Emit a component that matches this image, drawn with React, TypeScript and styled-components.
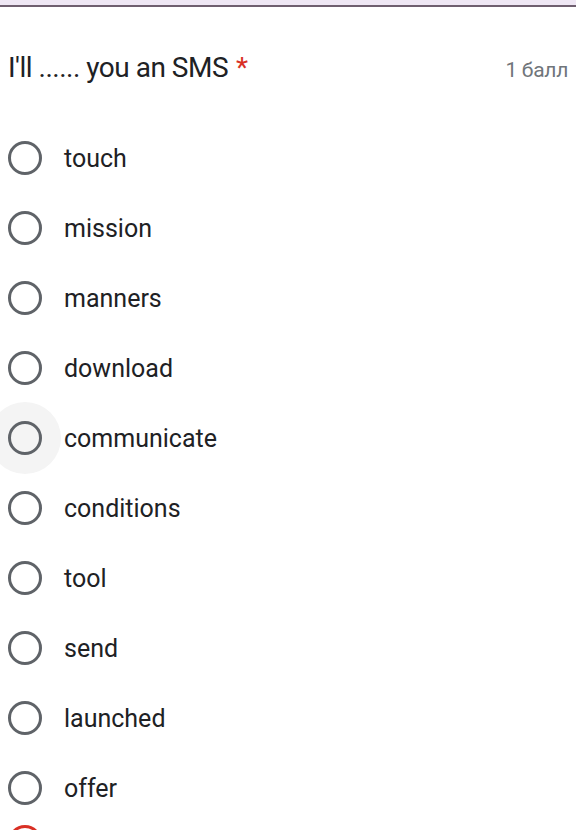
import * as React from 'react';
import styled, { createGlobalStyle } from 'styled-components';

const GlobalStyle = createGlobalStyle`
  html, body {
    margin: 0;
    padding: 0;
    background: #fff;
    overflow: hidden;
  }
  body {
    font-family: Roboto, "Liberation Sans", Arial, sans-serif;
    color: #202124;
  }
`;

const Page = styled.div`
  width: 576px;
  height: 830px;
  overflow: hidden;
  background: #fff;
`;

const TopBand = styled.div`
  height: 5px;
  background: #efe7f4;
  border-bottom: 2px solid #6f5f6f;
`;

const Header = styled.div`
  display: flex;
  align-items: baseline;
  justify-content: space-between;
  padding: 44px 8px 0 8px;
  height: 72px;
  box-sizing: border-box;
`;

const Title = styled.div`
  font-size: 28px;
  letter-spacing: -0.5px;
  color: #202124;
`;

const Star = styled.span`
  color: #d93025;
  margin-left: 8px;
`;

const Points = styled.div`
  font-size: 21px;
  letter-spacing: -0.3px;
  color: #70757a;
`;

const List = styled.div`
  display: flex;
  flex-direction: column;
  padding-top: 44px;
`;

const Row = styled.div<{ $last?: boolean }>`
  display: flex;
  align-items: ${p => (p.$last ? 'flex-start' : 'center')};
  height: 70px;
  padding-left: 8px;
  padding-top: ${p => (p.$last ? '2px' : '0')};
  box-sizing: border-box;
`;

const RadioWrap = styled.div<{ $hover?: boolean }>`
  position: relative;
  width: 34px;
  height: 34px;
  flex-shrink: 0;

  &::before {
    content: '';
    display: ${p => (p.$hover ? 'block' : 'none')};
    position: absolute;
    left: -19px;
    top: -19px;
    width: 72px;
    height: 72px;
    border-radius: 50%;
    background: #f4f4f4;
  }
`;

const Radio = styled.div<{ $color?: string }>`
  position: relative;
  width: 28px;
  height: 28px;
  border-radius: 50%;
  border: 3px solid ${p => p.$color || '#5f6368'};
`;

const Label = styled.div`
  margin-left: 22px;
  font-size: 25px;
  letter-spacing: 0;
  color: #202124;
`;

const options = [
  'touch',
  'mission',
  'manners',
  'download',
  'communicate',
  'conditions',
  'tool',
  'send',
  'launched',
  'offer',
];

export default function App() {
  return (
    <Page>
      <GlobalStyle />
      <TopBand />
      <Header>
        <Title>
          I'll ...... you an SMS<Star>*</Star>
        </Title>
        <Points>1 балл</Points>
      </Header>
      <List>
        {options.map(opt => (
          <Row key={opt}>
            <RadioWrap $hover={opt === 'communicate'}>
              <Radio />
            </RadioWrap>
            <Label>{opt}</Label>
          </Row>
        ))}
        <Row $last>
          <RadioWrap>
            <Radio $color="#d93025" />
          </RadioWrap>
        </Row>
      </List>
    </Page>
  );
}
